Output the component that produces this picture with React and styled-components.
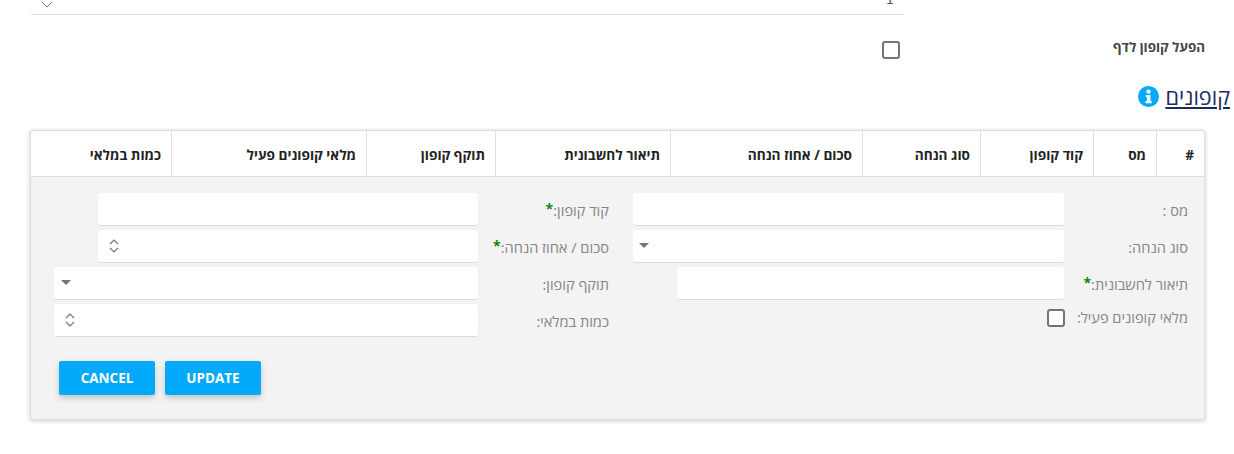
import React from 'react';
import styled, { createGlobalStyle } from 'styled-components';

const GlobalStyle = createGlobalStyle`
  html, body {
    margin: 0;
    padding: 0;
    background: #fff;
    font-family: 'Open Sans', 'Noto Sans', sans-serif;
  }
  * { box-sizing: border-box; }
`;

const Page = styled.div`
  width: 1234px;
  height: 454px;
  overflow: hidden;
  direction: rtl;
`;

const TopField = styled.div`
  width: 873px;
  height: 15px;
  margin-right: 330px;
  padding: 0 10px 0 10px;
  border-bottom: 1px solid #dfdfdf;
  display: flex;
  justify-content: space-between;
  overflow: hidden;
`;

const TopValue = styled.span`
  font-family: 'DejaVu Sans', sans-serif;
  font-size: 13px;
  line-height: 14px;
  height: 14px;
  margin-top: -7px;
  color: #555;
`;

const Chevron = styled.svg`
  width: 12px;
  height: 7px;
  margin-top: 1px;
`;

const ActivateRow = styled.div`
  display: flex;
  align-items: center;
  height: 18px;
  margin-top: 26px;
  padding-right: 29px;
`;

const ActivateLabel = styled.label`
  width: 305px;
  font-size: 13.4px;
  font-weight: 700;
  line-height: 16px;
  color: #444;
  margin-top: -6px;
`;

const Check = styled.span`
  display: block;
  width: 18px;
  height: 18px;
  border: 2px solid #757575;
  border-radius: 3px;
  background: #fff;
  flex: none;
`;

const TitleRow = styled.div`
  display: flex;
  align-items: center;
  gap: 6px;
  height: 30px;
  margin-top: 23px;
  padding-right: 4px;
`;

const Title = styled.a`
  font-size: 21.6px;
  line-height: 26px;
  color: #1c2a5c;
  text-decoration: underline;
`;

const InfoIcon = styled.svg`
  width: 21px;
  height: 21px;
  margin-top: -2px;
`;

const Card = styled.section`
  width: 1175px;
  height: 290px;
  margin-top: 18px;
  margin-right: 29px;
  border: 1px solid #dedede;
  border-radius: 3px 3px 0 0;
  background: #f3f3f3;
  box-shadow: 0 1px 5px rgba(0, 0, 0, 0.2);
`;

const HeaderRow = styled.div`
  display: grid;
  grid-template-columns: 48px 63px 113px 118px 192px 175px 129px 195px 1fr;
  height: 46px;
  background: #fff;
  border-bottom: 1px solid #dedede;
  border-radius: 3px 3px 0 0;
`;

const HeaderCell = styled.div`
  display: flex;
  align-items: center;
  padding-right: 10px;
  padding-top: 2px;
  font-size: 13.65px;
  font-weight: 700;
  color: #222;
  border-left: 1px solid #dedede;

  &:last-child {
    border-left: 0;
  }
`;

const Form = styled.div`
  display: grid;
  grid-template-columns: 579px 1fr;
  padding: 16px 16px 0 0;
`;

const FormColumn = styled.div`
  display: flex;
  flex-direction: column;
  gap: 4px;
`;

const Field = styled.div`
  display: flex;
  align-items: ${(p) => (p.$top ? 'flex-start' : 'center')};
  height: 33px;
`;

const Label = styled.label`
  width: ${(p) => p.$width}px;
  flex: none;
  font-size: 14.6px;
  line-height: 18px;
  color: #858585;
  white-space: nowrap;
  margin-top: ${(p) => (p.$top ? '4px' : '1px')};
`;

const Required = styled.span`
  color: #0a8a0a;
  font-size: 14px;
  font-weight: 700;
  position: relative;
  top: -2px;
`;

const Control = styled.div`
  width: ${(p) => p.$width}px;
  height: 33px;
  display: flex;
  align-items: center;
  justify-content: flex-end;
  padding-left: ${(p) => p.$pad || 0}px;
  background: #fff;
  border-bottom: 1px solid #d9d9d9;
  border-radius: 3px;
`;

const Caret = styled.span`
  width: 0;
  height: 0;
  border-left: 5px solid transparent;
  border-right: 5px solid transparent;
  border-top: 5px solid #757575;
  margin-top: -1px;
`;

const Spinner = styled.svg`
  width: 10px;
  height: 14px;
`;

const FormCheck = styled(Check)`
  margin-top: 5px;
`;

const Buttons = styled.div`
  display: flex;
  direction: ltr;
  gap: 10px;
  margin: 24px 0 0 28px;
`;

const Button = styled.button`
  width: 96px;
  height: 34px;
  border: 0;
  border-radius: 2px;
  background: #03aaf9;
  color: #fff;
  font-family: 'Open Sans', sans-serif;
  font-size: 13.5px;
  font-weight: 700;
  box-shadow: 0 3px 6px rgba(0, 0, 0, 0.2);
`;

const headers = ['#', 'מס', 'קוד קופון', 'סוג הנחה', 'סכום / אחוז הנחה', 'תיאור לחשבונית', 'תוקף קופון', 'מלאי קופונים פעיל', 'כמות במלאי'];

const SpinnerIcon = () => (
  <Spinner viewBox="0 0 10 14" fill="none" stroke="#777" strokeWidth="1.2">
    <path d="M1 5l4-4 4 4M1 9l4 4 4-4" />
  </Spinner>
);

const App = () => (
  <Page>
    <GlobalStyle />
    <TopField>
      <TopValue>1</TopValue>
      <Chevron viewBox="0 0 12 7" fill="none" stroke="#777" strokeWidth="1">
        <path d="M1 1l5 5 5-5" />
      </Chevron>
    </TopField>

    <ActivateRow>
      <ActivateLabel>הפעל קופון לדף</ActivateLabel>
      <Check />
    </ActivateRow>

    <TitleRow>
      <Title>קופונים</Title>
      <InfoIcon viewBox="0 0 21 21">
        <circle cx="10.5" cy="10.5" r="10.5" fill="#03aaf9" />
        <circle cx="10.5" cy="5.6" r="2.2" fill="#fff" />
        <path d="M7.8 9h4.6v6h1.3v2.2H7.5V15h1.4v-3.8H7.8z" fill="#fff" />
      </InfoIcon>
    </TitleRow>

    <Card>
      <HeaderRow>
        {headers.map((h) => (
          <HeaderCell key={h}>{h}</HeaderCell>
        ))}
      </HeaderRow>

      <Form>
        <FormColumn>
          <Field>
            <Label $width={124}>מס :</Label>
            <Control $width={431} />
          </Field>
          <Field>
            <Label $width={124}>סוג הנחה:</Label>
            <Control $width={431} $pad={6}><Caret /></Control>
          </Field>
          <Field>
            <Label $width={124}>תיאור לחשבונית:<Required>*</Required></Label>
            <Control $width={387} />
          </Field>
          <Field $top>
            <Label $width={123} $top>מלאי קופונים פעיל:</Label>
            <FormCheck />
          </Field>
        </FormColumn>

        <FormColumn>
          <Field>
            <Label $width={131}>קוד קופון:<Required>*</Required></Label>
            <Control $width={380} />
          </Field>
          <Field>
            <Label $width={131}>סכום / אחוז הנחה:<Required>*</Required></Label>
            <Control $width={380} $pad={11}><SpinnerIcon /></Control>
          </Field>
          <Field>
            <Label $width={131}>תוקף קופון:</Label>
            <Control $width={424} $pad={7}><Caret /></Control>
          </Field>
          <Field>
            <Label $width={131}>כמות במלאי:</Label>
            <Control $width={424} $pad={11}><SpinnerIcon /></Control>
          </Field>
        </FormColumn>
      </Form>

      <Buttons>
        <Button>CANCEL</Button>
        <Button>UPDATE</Button>
      </Buttons>
    </Card>
  </Page>
);

export default App;
